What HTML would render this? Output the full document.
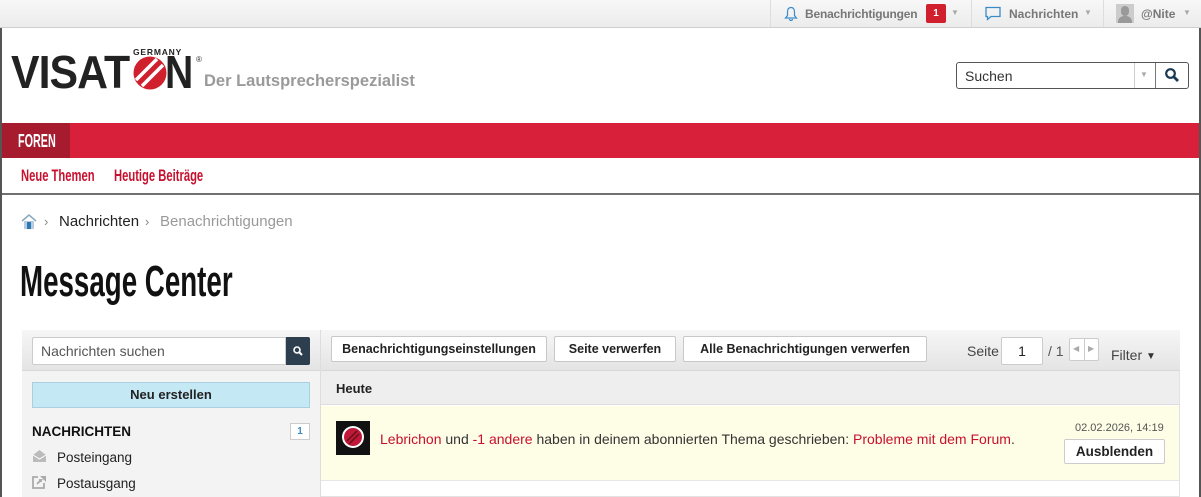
<!DOCTYPE html>
<html><head><meta charset="utf-8"><style>
*{box-sizing:border-box;margin:0;padding:0}
body{width:1201px;height:497px;overflow:hidden;background:#fff;font-family:"Liberation Sans",Arial,sans-serif;font-size:14px;color:#222;position:relative}
.a{position:absolute}
.cond{display:inline-block;transform-origin:0 0;white-space:nowrap}
.btn{position:absolute;top:336px;height:26px;background:#fff;border:1px solid #c8c8c8;border-radius:2px;font-weight:bold;font-size:12.5px;line-height:24px;text-align:center;color:#222;white-space:nowrap}
.red{color:#c8102e}
</style></head><body>
<!-- top bar -->
<div class="a" style="left:0;top:0;width:1201px;height:28px;background:linear-gradient(#f7f7f7,#ececec);border-bottom:1px solid #cfcfcf"></div>
<div class="a" style="left:770px;top:0;width:1px;height:27px;background:#ddd"></div>
<div class="a" style="left:971px;top:0;width:1px;height:27px;background:#ddd"></div>
<div class="a" style="left:1103px;top:0;width:1px;height:27px;background:#ddd"></div>
<svg class="a" style="left:784px;top:6px" width="14" height="15" viewBox="0 0 14 15"><path d="M7 1.5C4.5 1.5 3.5 3.5 3.5 6v3.5L1.5 12h11l-2-2.5V6c0-2.5-1-4.5-3.5-4.5zM5.5 13a1.5 1.5 0 0 0 3 0" fill="none" stroke="#3a8cc8" stroke-width="1.2"/></svg>
<div class="a" style="left:805px;top:7px;font-size:12px;font-weight:bold;color:#777;letter-spacing:-0.2px">Benachrichtigungen</div>
<div class="a" style="left:926px;top:4px;width:20px;height:19px;background:#d0202e;border-radius:2px;color:#fff;font-size:10px;font-weight:bold;text-align:center;line-height:19px">1</div>
<div class="a" style="left:951px;top:8px;font-size:8px;color:#aaa">▼</div>
<svg class="a" style="left:984px;top:6px" width="18" height="16" viewBox="0 0 18 16"><path d="M2 1.5h14v9H7l-3.5 3v-3H2z" fill="none" stroke="#3a8cc8" stroke-width="1.3"/></svg>
<div class="a" style="left:1009px;top:7px;font-size:12px;font-weight:bold;color:#777">Nachrichten</div>
<div class="a" style="left:1084px;top:8px;font-size:8px;color:#aaa">▼</div>
<div class="a" style="left:1116px;top:4px;width:18px;height:19px;background:#ccc;overflow:hidden"><div class="a" style="left:5px;top:2px;width:8px;height:10px;border-radius:4px;background:#999"></div><div class="a" style="left:2px;top:12px;width:14px;height:8px;border-radius:6px 6px 0 0;background:#999"></div></div>
<div class="a" style="left:1141px;top:7px;font-size:12px;font-weight:bold;color:#777">@Nite</div>
<div class="a" style="left:1183px;top:8px;font-size:8px;color:#aaa">▼</div>
<!-- side borders -->
<div class="a" style="left:0;top:28px;width:2px;height:469px;background:#555"></div>
<div class="a" style="left:1199px;top:28px;width:2px;height:469px;background:#555"></div>
<!-- logo -->
<div class="a" style="left:133px;top:47px;font-size:8.5px;font-weight:bold;letter-spacing:0.8px;color:#222">GERMANY</div>
<div class="a" style="left:11px;top:49px;font-size:46px;font-weight:bold;letter-spacing:-1px;color:#222;line-height:46px"><span class="cond" style="transform:scaleX(0.93)">VISAT</span></div>
<svg class="a" style="left:133px;top:56px" width="34" height="34" viewBox="0 0 34 34"><circle cx="17" cy="17" r="16.5" fill="#d0202e"/><path d="M3 24L24 3M9 30L30 9" stroke="#fff" stroke-width="3.5"/></svg>
<div class="a" style="left:165px;top:49px;font-size:46px;font-weight:bold;color:#222;line-height:46px"><span class="cond" style="transform:scaleX(0.85)">N</span></div>
<div class="a" style="left:196px;top:55px;font-size:8px;color:#333">®</div>
<div class="a" style="left:204px;top:72px;font-size:16.5px;font-weight:bold;color:#9a9a9a">Der Lautsprecherspezialist</div>
<!-- search -->
<div class="a" style="left:956px;top:62px;width:233px;height:27px;border:1px solid #555;border-radius:3px;background:#fff"></div>
<div class="a" style="left:965px;top:68px;font-size:14px;color:#333">Suchen</div>
<div class="a" style="left:1134px;top:63px;width:1px;height:25px;background:#ccc"></div>
<div class="a" style="left:1155px;top:63px;width:1px;height:25px;background:#777"></div>
<div class="a" style="left:1140px;top:70px;font-size:8px;color:#aaa">▼</div>
<svg class="a" style="left:1164px;top:67px" width="16" height="16" viewBox="0 0 16 16"><circle cx="6.5" cy="6.5" r="4.3" fill="none" stroke="#1a3a55" stroke-width="2.2"/><path d="M9.6 9.6L14 14" stroke="#1a3a55" stroke-width="2.8"/></svg>
<!-- red nav -->
<div class="a" style="left:2px;top:123px;width:1197px;height:35px;background:#d9203a"></div>
<div class="a" style="left:2px;top:123px;width:68px;height:35px;background:#a61b2d"></div>
<div class="a" style="left:18px;top:131px;color:#fff;font-size:18px;font-weight:bold"><span class="cond" style="transform:scaleX(0.6)">FOREN</span></div>
<div class="a" style="left:21px;top:166px;font-size:17px;color:#c8102e;font-weight:bold"><span class="cond" style="transform:scaleX(0.66)">Neue Themen</span></div>
<div class="a" style="left:114px;top:166px;font-size:17px;color:#c8102e;font-weight:bold"><span class="cond" style="transform:scaleX(0.66)">Heutige Beiträge</span></div>
<div class="a" style="left:2px;top:193px;width:1197px;height:2px;background:#707070"></div>
<!-- breadcrumb -->
<svg class="a" style="left:21px;top:213px" width="16" height="17" viewBox="0 0 16 17"><path d="M1 8L8 2l7 6" fill="none" stroke="#8ab" stroke-width="1.5"/><rect x="3" y="8" width="10" height="8" fill="#bcd"/><rect x="6" y="9" width="4" height="7" fill="#2a7ab8"/></svg>
<div class="a" style="left:44px;top:214px;font-size:13px;color:#888">›</div>
<div class="a" style="left:59px;top:213px;font-size:15px;color:#222">Nachrichten</div>
<div class="a" style="left:145px;top:214px;font-size:13px;color:#888">›</div>
<div class="a" style="left:160px;top:213px;font-size:15px;color:#999">Benachrichtigungen</div>
<div class="a" style="left:20px;top:257px;font-size:44px;color:#111;font-weight:bold"><span class="cond" style="transform:scaleX(0.63)">Message Center</span></div>
<!-- panel -->
<div class="a" style="left:22px;top:330px;width:1158px;height:167px;border:1px solid #e2e2e2;background:#fff"></div>
<div class="a" style="left:22px;top:330px;width:299px;height:167px;background:#f3f3f3;border-right:1px solid #ddd"></div>
<div class="a" style="left:22px;top:330px;width:1158px;height:41px;background:linear-gradient(#f6f6f6,#e4e4e4);border-bottom:1px solid #d8d8d8"></div>
<div class="a" style="left:320px;top:330px;width:1px;height:167px;background:#ddd"></div>
<div class="a" style="left:32px;top:337px;width:254px;height:28px;background:#fff;border:1px solid #ccc;border-radius:2px 0 0 2px"></div>
<div class="a" style="left:41px;top:343px;font-size:14px;color:#555">Nachrichten suchen</div>
<div class="a" style="left:286px;top:337px;width:24px;height:28px;background:#2d3e4e;border-radius:0 2px 2px 0"></div>
<svg class="a" style="left:292px;top:345px" width="12" height="12" viewBox="0 0 12 12"><circle cx="5" cy="5" r="3" fill="none" stroke="#fff" stroke-width="1.6"/><path d="M7 7l3 3" stroke="#fff" stroke-width="2"/></svg>
<div class="btn" style="left:331px;width:216px">Benachrichtigungseinstellungen</div>
<div class="btn" style="left:554px;width:122px">Seite verwerfen</div>
<div class="btn" style="left:683px;width:244px">Alle Benachrichtigungen verwerfen</div>
<div class="a" style="left:967px;top:343px;font-size:14px;color:#444">Seite</div>
<div class="a" style="left:1001px;top:337px;width:42px;height:28px;background:#fff;border:1px solid #ccc;border-radius:2px;text-align:center;line-height:26px;font-size:14px">1</div>
<div class="a" style="left:1048px;top:343px;font-size:14px;color:#555">/ 1</div>
<div class="a" style="left:1069px;top:338px;width:30px;height:23px;background:#fff;border:1px solid #ccc;border-radius:2px"><div class="a" style="left:14px;top:0;width:1px;height:21px;background:#ccc"></div><div class="a" style="left:3px;top:5px;font-size:8px;color:#aaa">◀</div><div class="a" style="left:18px;top:5px;font-size:8px;color:#aaa">▶</div></div>
<div class="a" style="left:1111px;top:347px;font-size:14px;color:#444">Filter <span style="font-size:10px;color:#333;position:relative;top:-1px">▼</span></div>
<!-- left sidebar -->
<div class="a" style="left:32px;top:382px;width:278px;height:26px;background:#c5e8f5;border:1px solid #a9cfe0;text-align:center;line-height:24px;font-weight:bold;font-size:13px;color:#222">Neu erstellen</div>
<div class="a" style="left:32px;top:424px;font-weight:bold;font-size:13.5px;color:#111">NACHRICHTEN</div>
<div class="a" style="left:290px;top:423px;width:20px;height:17px;background:#fff;border:1px solid #ccc;text-align:center;line-height:15px;font-size:10px;font-weight:bold;color:#3a8cc8">1</div>
<svg class="a" style="left:32px;top:449px" width="15" height="14" viewBox="0 0 15 14"><path d="M1 6L7.5 1 14 6v7H1z" fill="#bbb"/><path d="M1 6l6.5 4L14 6" fill="none" stroke="#fff" stroke-width="1"/></svg>
<div class="a" style="left:57px;top:450px;font-size:13.5px;color:#222">Posteingang</div>
<svg class="a" style="left:32px;top:475px" width="15" height="14" viewBox="0 0 15 14"><path d="M6 2H1v11h11V8" fill="none" stroke="#aaa" stroke-width="1.8"/><path d="M5 9l4-4h-2M9 5v2" stroke="#aaa" stroke-width="1.8" fill="none"/><path d="M8 1h6v6z" fill="#aaa"/></svg>
<div class="a" style="left:57px;top:476px;font-size:13.5px;color:#222">Postausgang</div>
<!-- right content -->
<div class="a" style="left:321px;top:371px;width:858px;height:34px;background:#eee;border-bottom:1px solid #ddd"></div>
<div class="a" style="left:336px;top:381px;font-weight:bold;font-size:13px;color:#222">Heute</div>
<div class="a" style="left:321px;top:406px;width:858px;height:75px;background:#fefde6;border-bottom:1px solid #e6e6e6"></div>
<div class="a" style="left:336px;top:421px;width:34px;height:34px;background:#111"></div>
<svg class="a" style="left:338px;top:423px" width="30" height="30" viewBox="0 0 30 30"><circle cx="15" cy="14" r="11" fill="#fff"/><circle cx="15" cy="14" r="9" fill="#c0183a"/><path d="M9 18l10-10M11 21l10-10" stroke="#611" stroke-width="1.5"/></svg>
<div class="a" style="left:380px;top:431px;font-size:14px;color:#333"><span class="red">Lebrichon</span> und <span class="red">-1 andere</span> haben in deinem abonnierten Thema geschrieben: <span class="red">Probleme mit dem Forum</span>.</div>
<div class="a" style="left:1075px;top:422px;font-size:11px;color:#555">02.02.2026, 14:19</div>
<div class="a" style="left:1064px;top:439px;width:101px;height:25px;background:#fff;border:1px solid #ccc;border-radius:2px;text-align:center;line-height:23px;font-weight:bold;font-size:13.5px;color:#222">Ausblenden</div>
</body></html>
